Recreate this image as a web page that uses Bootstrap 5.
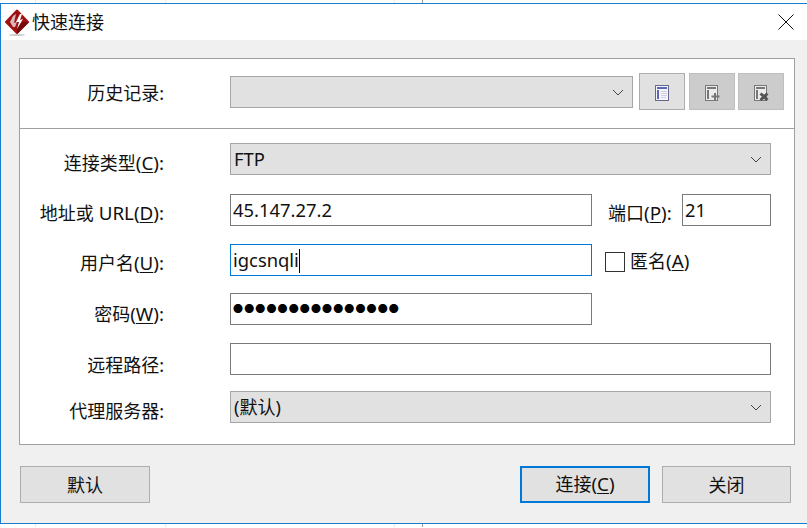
<!DOCTYPE html>
<html lang="zh-CN">
<head>
<meta charset="utf-8">
<title>快速连接</title>
<link href="https://cdn.jsdelivr.net/npm/bootstrap@5.3.0/dist/css/bootstrap.min.css" rel="stylesheet">
<style>
html,body{margin:0;height:528px;overflow:hidden;background:#fff;}
body{font-family:"Noto Sans","Noto Sans CJK SC",sans-serif;font-size:18px;color:#111;display:flex;flex-direction:column;}
.strip{height:3px;flex:none;background:
 linear-gradient(#e8e8f4,#e8e8f4) 35px 0/1px 100% no-repeat,
 linear-gradient(#e8e8f4,#e8e8f4) 165px 0/1px 100% no-repeat,
 linear-gradient(#e8e8f4,#e8e8f4) 394px 0/1px 100% no-repeat,
 linear-gradient(#999,#999) 422px 0/1px 100% no-repeat,#fff;}
.win{height:521px;flex:none;border:solid #1a7ccb;border-width:1px 0 1px 1px;background:#f0f0f0;display:flex;flex-direction:column;}
.titlebar{height:36px;background:#fff;flex:none;padding-left:3px;gap:2px;}
.ttl{line-height:36px;margin-top:-1px;}
.xbtn{margin-left:auto;margin-right:13px;width:16px;height:16px;display:block;}
.pane{margin:18px 0 0 18px;width:776px;height:387px;background:#fff;border:1px solid #a0a0a0;flex:none;}
.hist{height:70px;border-bottom:1px solid #a0a0a0;padding-top:17px;}
.hist .lbl{padding-top:5px;}
.form-area{padding-top:14px;}
.lbl{width:144px;text-align:right;flex:none;line-height:24px;padding-top:8px;white-space:nowrap;}
.lat{font-size:18.8px;}
.ctl{height:32px;flex:none;margin-left:66px;}
.drop{background:#e1e1e1;border:1px solid #a6a6a6;padding:0 3px;line-height:30px;position:relative;}
.drop svg{position:absolute;right:8px;top:12px;}
.dl{font-size:18.4px;}
.w403{width:403px;}.w541{width:541px;}.w362{width:362px;}
.field{background:#fff;border:1px solid #7a7a7a;padding:0 2px;line-height:30px;font-size:18.4px;}
.field.on{border-color:#0078d7;}
.caret-mark{display:inline-block;width:1px;height:24px;background:#000;vertical-align:-6px;}
.field.dots{font-size:10px;letter-spacing:1.13px;line-height:31px;color:#000;}
.r1{height:51px}.r2{height:50px}.r3{height:49px}.r4{height:50px}.r5{height:48px}.r6{height:32px}
.r2 .lbl,.r3 .lbl{padding-top:7px;}
.r5 .lbl{padding-top:10px;}
.r4 .lbl{padding-top:9px;}
.tool{width:46px;height:37px;margin-top:-3px;border:1px solid #adadad;background:#e1e1e1;flex:none;padding:0;}
.tool.off{background:#cccccc;border-color:#bfbfbf;}
.t1{margin-left:6px;}.t2{margin-left:4px;}.t3{margin-left:3px;}
.portlbl{margin-left:16px;width:64px;line-height:24px;padding-top:7px;white-space:nowrap;flex:none;}
.portin{width:89px;margin-left:10px;}
.chk{width:20px;height:20px;border:1px solid #333;background:#fff;margin:8px 5px 0 13px;flex:none;}
.chklbl{line-height:24px;padding-top:5px;white-space:nowrap;}
.foot{padding:21px 16px 0 19px;}
.wbtn{width:130px;height:37px;background:#e1e1e1;border:1px solid #adadad;font-size:18px;line-height:34px;text-align:center;padding:0;color:#111;}
.wbtn.pri{border:2px solid #0078d7;line-height:33px;margin-right:12px;}
.wbtn.cl{width:129px;}
u{text-underline-offset:2px;text-decoration-thickness:1px;}
</style>
</head>
<body>
<div class="strip"></div>
<div class="win">
  <div class="titlebar d-flex align-items-center">
    <svg width="26" height="28" viewBox="0 0 26 28">
      <ellipse cx="13" cy="27" rx="8" ry="1" fill="#ccc"/>
      <path d="M13 2.500 24 14 13 25 2 14Z" fill="#a01212" stroke="#a01212" stroke-width="2" stroke-linejoin="round"/>
      <path d="M13 26 25 14 19 14 13 20Z" fill="#6f0b0b"/>
      <path d="M12 6 9 8 6 14 9 19 11 19 13 14 10 15Z" fill="#d8b8b8"/>
      <path d="M16 6 12 14 15 14 13 21 19 11 16 12 18 6Z" fill="#fff"/>
    </svg>
    <span class="ttl">快速连接</span>
    <svg class="xbtn" viewBox="0 0 16 16"><path d="M.5.5 15.500 15.500M15.500.5.5 15.500" stroke="#111" stroke-width="1" fill="none"/></svg>
  </div>
  <div class="pane">
    <div class="hist d-flex">
      <div class="lbl">历史记录:</div>
      <div class="ctl drop w403"><svg width="12" height="8" viewBox="0 0 12 8"><path d="M1 1 6 6 11 1" stroke="#444" fill="none"/></svg></div>
      <button class="tool t1" aria-label="list">
        <svg width="14" height="16" viewBox="0 0 14 16"><rect x=".5" y=".5" width="13" height="15" fill="#f4f4fa" stroke="#66688c"/><rect x="2" y="2" width="10" height="2" fill="#5a68b8"/><rect x="2" y="5" width="2" height="9" fill="#5a68b8"/><path d="M6 6.500h6M6 8.500h6M6 10.500h6M6 12.500h5" stroke="#cfcfe4"/></svg>
      </button>
      <button class="tool off t2" aria-label="add">
        <svg width="15" height="16" viewBox="0 0 15 16"><rect x=".5" y=".5" width="12" height="15" fill="#ececec" stroke="#777"/><rect x="2" y="2" width="9" height="2" fill="#777"/><rect x="2" y="5" width="2" height="9" fill="#777"/><path d="M10 8v7M6.500 11.500h8" stroke="#777" stroke-width="2"/></svg>
      </button>
      <button class="tool off t3" aria-label="delete">
        <svg width="15" height="16" viewBox="0 0 15 16"><rect x=".5" y=".5" width="12" height="15" fill="#ececec" stroke="#777"/><rect x="2" y="2" width="9" height="2" fill="#777"/><rect x="2" y="5" width="2" height="9" fill="#777"/><path d="M6.500 8.500 13.500 15M13.500 8.500 6.500 15" stroke="#555" stroke-width="3"/></svg>
      </button>
    </div>
    <div class="form-area">
      <div class="d-flex r1">
        <div class="lbl">连接类型<span class="lat">(<u>C</u>):</span></div>
        <div class="ctl drop dl w541">FTP<svg width="12" height="8" viewBox="0 0 12 8"><path d="M1 1 6 6 11 1" stroke="#444" fill="none"/></svg></div>
      </div>
      <div class="d-flex r2">
        <div class="lbl">地址或<span class="lat"> URL(<u>D</u>):</span></div>
        <div class="ctl field w362">45.147.27.2</div>
        <div class="portlbl">端口<span class="lat">(<u>P</u>):</span></div>
        <div class="ctl field portin">21</div>
      </div>
      <div class="d-flex r3">
        <div class="lbl">用户名<span class="lat">(<u>U</u>):</span></div>
        <div class="ctl field on w362">igcsnqli<span class="caret-mark"></span></div>
        <div class="chk"></div>
        <div class="chklbl">匿名<span class="lat">(<u>A</u>)</span></div>
      </div>
      <div class="d-flex r4">
        <div class="lbl">密码<span class="lat">(<u>W</u>):</span></div>
        <div class="ctl field dots w362">●●●●●●●●●●●●●●●</div>
      </div>
      <div class="d-flex r5">
        <div class="lbl">远程路径:</div>
        <div class="ctl field w541"></div>
      </div>
      <div class="d-flex r6">
        <div class="lbl">代理服务器:</div>
        <div class="ctl drop w541">(默认)<svg width="12" height="8" viewBox="0 0 12 8"><path d="M1 1 6 6 11 1" stroke="#444" fill="none"/></svg></div>
      </div>
    </div>
  </div>
  <div class="foot d-flex">
    <button class="wbtn me-auto">默认</button>
    <button class="wbtn pri">连接<span class="lat">(<u>C</u>)</span></button>
    <button class="wbtn cl">关闭</button>
  </div>
</div>
<div class="strip"></div>
</body>
</html>
